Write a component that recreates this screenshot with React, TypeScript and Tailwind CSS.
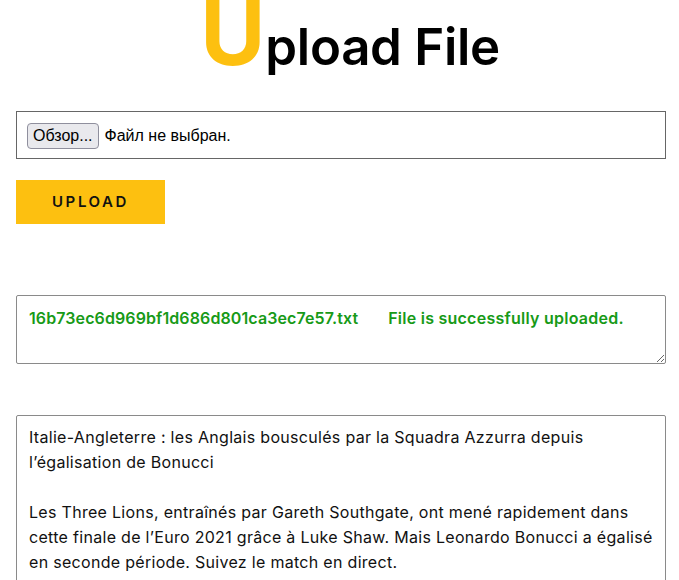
import React from 'react';

const article = [
  'Italie-Angleterre : les Anglais bousculés par la Squadra Azzurra depuis',
  'l’égalisation de Bonucci',
  '',
  'Les Three Lions, entraînés par Gareth Southgate, ont mené rapidement dans',
  'cette finale de l’Euro 2021 grâce à Luke Shaw. Mais Leonardo Bonucci a égalisé',
  'en seconde période. Suivez le match en direct.',
];

const App: React.FC = () => {
  return (
    <div className="w-[679px] h-[580px] overflow-hidden bg-white font-['Inter',sans-serif] text-[#111]">
      <div className="pl-4 pr-[13px]">
        <h1 className="flex items-baseline justify-center h-[72px] mt-[-6px] pl-[18px] leading-none">
          <span className="text-[89px] font-bold text-[#fdc010] leading-[78px]">U</span>
          <span className="text-[51px] font-semibold text-black tracking-[-0.3px]">pload File</span>
        </h1>

        <div className="mt-[45px] h-[48px] border border-[#666] flex items-center pt-[2px] px-[10px] font-['Liberation_Sans',sans-serif] text-[16px] text-black">
          <button className="h-[26px] px-[5px] bg-[#e9e9ed] border border-[#8f8f9d] rounded-[4px] text-[16px] leading-none">
            Обзор...
          </button>
          <span className="ml-[6px]">Файл не выбран.</span>
        </div>

        <button className="mt-[21px] w-[149px] h-[44px] bg-[#fdc010] text-[15px] font-semibold tracking-[2.6px] text-[#111] flex items-center justify-center">
          UPLOAD
        </button>

        <div className="mt-[71px] h-[69px] border border-[#8a8a8a] rounded-[2px] resize overflow-hidden px-3 pt-[10px] text-[16px] font-semibold text-[#179a17] flex">
          <span className="tracking-[0.1px]">16b73ec6d969bf1d686d801ca3ec7e57.txt</span>
          <span className="ml-[30px] tracking-[0.25px]">File is successfully uploaded.</span>
        </div>

        <div className="mt-[51px] h-[200px] border border-[#8a8a8a] rounded-[2px] px-3 pt-[9px] text-[16px] leading-[25px] tracking-[0.3px] text-[#111]">
          {article.map((line, i) => (
            <div key={i} className="whitespace-nowrap h-[25px]">{line}</div>
          ))}
        </div>
      </div>
    </div>
  );
};

export default App;
